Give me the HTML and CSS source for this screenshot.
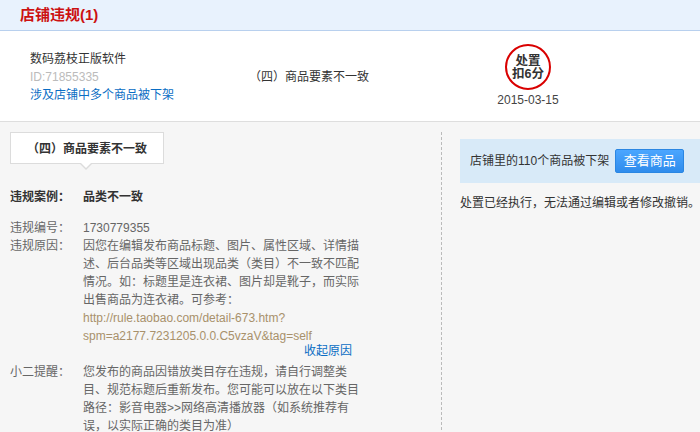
FILE: index.html
```html
<!DOCTYPE html>
<html lang="zh-CN">
<head>
    <meta charset="UTF-8">
    <meta name="viewport" content="width=device-width, initial-scale=1.0">
    <title>店铺违规</title>
    <link rel="stylesheet" href="styles.css">
</head>
<body>
    <div class="header">
        <div class="header-title">店铺违规(1)</div>
    </div>

    <div class="record">
        <div class="shop">
            <div class="shop-name">数码荔枝正版软件</div>
            <div class="shop-id">ID:71855335</div>
            <a class="shop-link" href="#">涉及店铺中多个商品被下架</a>
        </div>
        <div class="record-reason">（四）商品要素不一致</div>
        <div class="penalty">
            <div class="stamp">处置<br>扣6分</div>
            <div class="penalty-date">2015-03-15</div>
        </div>
    </div>

    <div class="detail">
        <div class="detail-left">
            <div class="tab">（四）商品要素不一致</div>

            <div class="row row-case">
                <div class="label">违规案例：</div>
                <div class="value">品类不一致</div>
            </div>

            <div class="row">
                <div class="label">违规编号：</div>
                <div class="value">1730779355</div>
            </div>

            <div class="row">
                <div class="label">违规原因：</div>
                <div class="value">
                    因您在编辑发布商品标题、图片、属性区域、详情描述、后台品类等区域出现品类（类目）不一致不匹配情况。如：标题里是连衣裙、图片却是靴子，而实际出售商品为连衣裙。可参考：
                    <a class="rule-link" href="#">http://rule.taobao.com/detail-673.htm?<br>spm=a2177.7231205.0.0.C5vzaV&amp;tag=self</a>
                    <a class="toggle" href="#">收起原因</a>
                </div>
            </div>

            <div class="row row-tip">
                <div class="label">小二提醒：</div>
                <div class="value">您发布的商品因错放类目存在违规，请自行调整类目、规范标题后重新发布。您可能可以放在以下类目路径：影音电器&gt;&gt;网络高清播放器（如系统推荐有误，以实际正确的类目为准）</div>
            </div>
        </div>

        <div class="detail-right">
            <div class="notice">
                <span>店铺里的110个商品被下架</span>
                <a class="btn" href="#">查看商品</a>
            </div>
            <div class="notice-text">处置已经执行，无法通过编辑或者修改撤销。</div>
        </div>
    </div>
</body>
</html>
```

FILE: styles.css
```css
* {
    margin: 0;
    padding: 0;
    box-sizing: border-box;
}

body {
    width: 700px;
    background-color: #f6f6f6;
    color: #333;
    font-family: 'Liberation Sans', 'Noto Sans CJK SC', sans-serif;
    font-size: 12px;
    line-height: 18px;
}

a {
    text-decoration: none;
}

.header {
    height: 31px;
    background-color: #e8f2fd;
    border-bottom: 1px solid #b8d0ee;
    padding-left: 20px;
    display: flex;
    align-items: center;
}

.header-title {
    color: #cc1111;
    font-size: 15px;
    font-weight: bold;
}

.record {
    height: 91px;
    background-color: #fff;
    border-bottom: 1px solid #dedede;
    display: flex;
    align-items: center;
}

.shop {
    width: 249px;
    padding-left: 30px;
    padding-top: 2px;
}

.shop-name {
    color: #333;
}

.shop-id {
    color: #bbb;
}

.shop-link {
    color: #0a6dc4;
}

.record-reason {
    width: 229px;
    padding-top: 2px;
    color: #333;
}

.penalty {
    width: 100px;
    display: flex;
    flex-direction: column;
    align-items: center;
}

.stamp {
    width: 46px;
    height: 46px;
    border: 2px solid #d90000;
    border-radius: 50%;
    display: flex;
    align-items: center;
    justify-content: center;
    text-align: center;
    padding-top: 3px;
    font-size: 12.5px;
    font-weight: bold;
    line-height: 13px;
    color: #333;
}

.penalty-date {
    margin-top: 1px;
    color: #444;
}

.detail {
    display: flex;
    padding-top: 10px;
}

.detail-left {
    width: 442px;
    padding-left: 10px;
    padding-bottom: 20px;
    border-right: 1px dashed #bbb;
}

.tab {
    position: relative;
    width: 154px;
    height: 32px;
    line-height: 32px;
    background-color: #fff;
    border: 1px solid #dcdcdc;
    text-align: center;
    font-weight: bold;
    color: #333;
}

.tab::before,
.tab::after {
    content: "";
    position: absolute;
    left: 69px;
    border-style: solid;
    border-color: transparent;
}

.tab::before {
    bottom: -7px;
    border-width: 6px 6px 0 6px;
    border-top-color: #dcdcdc;
}

.tab::after {
    bottom: -5px;
    left: 70px;
    border-width: 5px 5px 0 5px;
    border-top-color: #fff;
}

.row {
    display: flex;
    color: #666;
}

.row-case {
    margin-top: 24px;
    margin-bottom: 13px;
    font-weight: bold;
    color: #333;
}

.label {
    width: 73px;
    flex-shrink: 0;
}

.value {
    width: 277px;
}

.rule-link {
    color: #a8916b;
}

.toggle {
    display: block;
    text-align: right;
    padding-right: 8px;
    line-height: 12px;
    color: #0a6dc4;
}

.row-tip {
    margin-top: 6px;
}

.detail-right {
    flex: 1;
    padding-top: 7px;
    padding-left: 18px;
}

.notice {
    height: 44px;
    background-color: #d8eaf8;
    padding-left: 10px;
    display: flex;
    align-items: center;
    color: #333;
}

.btn {
    margin-left: 6px;
    width: 69px;
    height: 24px;
    line-height: 22px;
    text-align: center;
    color: #fff;
    font-size: 13px;
    background: linear-gradient(#4ba6ff, #2f8cec);
    border: 1px solid #2a86e2;
    border-radius: 2px;
}

.notice-text {
    margin-top: 11px;
    color: #333;
}
```
